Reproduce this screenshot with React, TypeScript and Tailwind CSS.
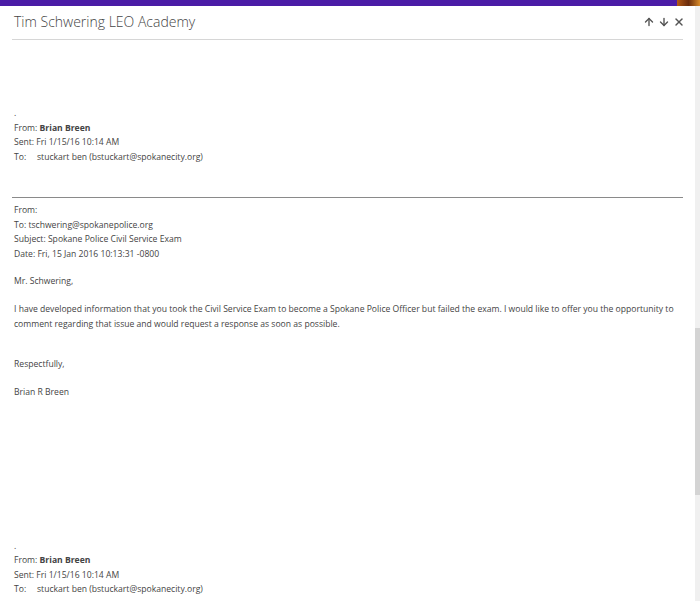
import React from 'react';
import { ArrowUp, ArrowDown, X } from 'lucide-react';

const Line: React.FC<{ children?: React.ReactNode }> = ({ children }) => (
  <div className="h-[14.5px] whitespace-nowrap">{children}</div>
);

const Forwarded: React.FC = () => (
  <div>
    <Line>.</Line>
    <Line>
      From: <span className="font-bold">Brian Breen</span>
    </Line>
    <Line>Sent: Fri 1/15/16 10:14 AM</Line>
    <Line>
      <span className="inline-block w-[23px]">To:</span>stuckart ben (bstuckart@spokanecity.org)
    </Line>
  </div>
);

export default function App() {
  return (
    <div className="w-[700px] h-[601px] overflow-hidden bg-white flex flex-col" style={{ fontFamily: '"Open Sans", sans-serif' }}>
      <div className="h-[6px] flex shrink-0">
        <div className="flex-1 bg-[#4b1ca6]" />
        <div className="w-[23px] bg-gradient-to-r from-[#b35a14] via-[#6b2c0c] to-[#d98c2a]" />
      </div>
      <div className="flex flex-1 min-h-0">
        <div className="flex-1 pl-[12px] pr-[10px] flex flex-col">
          <div className="h-[34px] border-b border-[#d6d6d6] flex items-start justify-between pt-[7px] pl-[2px]">
            <span className="text-[14px] font-light text-[#444] leading-[17px]">Tim Schwering LEO Academy</span>
            <div className="flex items-center gap-[3px] text-[#555] pt-[3px] mr-[-2px]">
              <ArrowUp size={12} strokeWidth={2.8} />
              <ArrowDown size={12} strokeWidth={2.8} />
              <X size={12} strokeWidth={2.8} />
            </div>
          </div>
          <div className="text-[8.6px] leading-[14.5px] text-[#444]">
            <div className="pl-[2px] mt-[66px]">
              <Forwarded />
            </div>
            <div className="mt-[33px] border-t border-[#8a8a8a]" />
            <div className="pl-[2px] mt-[5px]">
              <Line>From:</Line>
              <Line>To: tschwering@spokanepolice.org</Line>
              <Line>Subject: Spokane Police Civil Service Exam</Line>
              <Line>Date: Fri, 15 Jan 2016 10:13:31 -0800</Line>
              <div className="mt-[13px]">
                <Line>Mr. Schwering,</Line>
              </div>
              <div className="mt-[13.5px] leading-[14.5px] whitespace-nowrap">
                I have developed information that you took the Civil Service Exam to become a Spokane Police Officer but failed the exam. I would like to offer you the opportunity to
                <br />
                comment regarding that issue and would request a response as soon as possible.
              </div>
              <div className="mt-[26px]">
                <Line>Respectfully,</Line>
              </div>
              <div className="mt-[13.5px]">
                <Line>Brian R Breen</Line>
              </div>
              <div className="mt-[139px]">
                <Forwarded />
              </div>
            </div>
          </div>
        </div>
        <div className="w-[5px] ml-[2px] bg-[#f0f0f0] flex flex-col">
          <div className="mt-[322px] h-[167px] bg-[#d4d4d4]" />
        </div>
      </div>
    </div>
  );
}
